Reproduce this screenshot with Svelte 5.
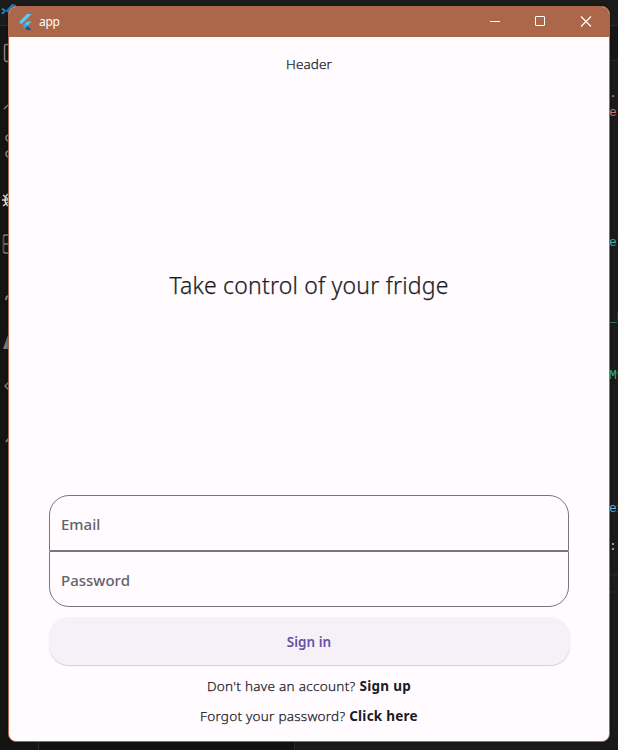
<script>
  let email = $state('');
  let password = $state('');

  const code = [
    { y: 97, text: '.t', color: '#ce7d62' },
    { y: 116, text: 'er', color: '#c97b66' },
    { y: 246, text: 'et', color: '#3fb69b' },
    { y: 321, text: '_b', color: '#3fb69b' },
    { y: 379, text: 'My', color: '#35b27c' },
    { y: 512, text: 'ex', color: '#69b5dc' },
    { y: 550, text: ':', color: '#b7bfc4' }
  ];
</script>

<div class="desktop">
  <svg class="editor" viewBox="0 0 618 750" aria-hidden="true">
    <rect width="618" height="750" fill="#141414" />
    <rect width="618" height="25" fill="#1b1b1b" />
    <rect y="25" width="618" height="1" fill="#2b2b2b" />
    <rect x="609" y="26" width="9" height="34" fill="#161616" />
    <rect x="600" y="60" width="18" height="690" fill="#1b1b1b" />
    <rect x="600" y="60" width="18" height="1" fill="#2b2b2b" />
    <rect x="600" y="574" width="18" height="2" fill="#232323" />
    <rect x="600" y="591" width="18" height="2" fill="#232323" />
    <rect x="39" y="740" width="255" height="10" fill="#121212" />
    <rect x="294" y="740" width="324" height="10" fill="#191919" />
    <rect x="38" y="740" width="1" height="10" fill="#292929" />
    <rect x="294" y="740" width="1" height="10" fill="#292929" />
    <path d="M1 9.500L3 8l3 2.500L12 4l4 1v10l-4 1-6-5-3 3.500L1 13l3-2z" fill="#2580bd" />
    <g fill="none" stroke="#858585" stroke-width="1.4">
      <path d="M10 44.500H6q-1.500 0-1.500 2v12q0 3 2 3H10" />
      <path d="M4 109l4-4M9 135q-3 0-3 3t3 3M9 151q-3 0-3 3t3 3" />
      <path d="M9 235H5q-1.500 0-1.500 2v14q0 2 2 2h4M3.500 244H9" />
      <path d="M9 382l-4 4 4 4" />
      <path d="M6 300q0-4 3-4M6 442l3-4" stroke-width="2" />
    </g>
    <path d="M3.500 236v16" stroke="#4d478d" />
    <path d="M3 195l5 4M2 200h6M3 206l5-4M8 194q-3 2-3 6t3 6" fill="none" stroke="#d6dbdc" stroke-width="1.400" />
    <path d="M3 349L8 335v14z" fill="#747d83" />
    {#each code as c}
      <text x="609" y={c.y} fill={c.color}>{c.text}</text>
    {/each}
  </svg>

  <main class="window">
    <header class="titlebar">
      <svg class="logo" width="14" height="16" viewBox="0 0 14 16" aria-hidden="true">
        <path d="M8 0H12.700L2.400 10.200 0 8z" fill="#5bc8f8" />
        <path d="M8 7.400H12.700L8.400 11.700 12.700 16H8L3.800 11.700z" fill="#55c5f7" />
        <path d="M6 13.900L8.400 11.700 12.700 16H8z" fill="#075b9e" />
        <path d="M3.800 11.700l2.300-2.200 2.300 2.200-2.300 2.200z" fill="#39a9df" />
      </svg>
      <span class="title">app</span>
      <div class="controls">
        <button aria-label="Minimize"><svg width="12" height="12"><path d="M2 5.500h10" /></svg></button>
        <button aria-label="Maximize"><svg width="12" height="12"><rect x="1.500" y=".5" width="9" height="9" rx=".5" /></svg></button>
        <button aria-label="Close"><svg width="12" height="12"><path d="M1 .5l10 10M11 .5L1 10.500" stroke-width="1.2" /></svg></button>
      </div>
    </header>
    <div class="header">Header</div>
    <div class="hero"><h1>Take control of your fridge</h1></div>
    <form onsubmit={(e) => e.preventDefault()}>
      <input class="first" type="email" placeholder="Email" bind:value={email} />
      <input class="last" type="password" placeholder="Password" bind:value={password} />
      <button class="signin">Sign in</button>
    </form>
    <p class="signup">Don't have an account? <b>Sign up</b></p>
    <p class="forgot">Forgot your password? <b>Click here</b></p>
  </main>
</div>

<style>
  .desktop {
    position: relative;
    box-sizing: border-box;
    width: 618px;
    height: 750px;
    padding: 6px 8px 8px;
    overflow: hidden;
    font-family: "Noto Sans", "Open Sans", sans-serif;
  }
  .editor {
    position: absolute;
    inset: 0;
    width: 618px;
    height: 750px;
  }
  .editor text {
    font: 13px "Liberation Mono", monospace;
  }
  .window {
    position: relative;
    box-sizing: border-box;
    display: flex;
    flex-direction: column;
    width: 602px;
    height: 736px;
    border: 1px solid #ac674a;
    border-radius: 8px;
    overflow: hidden;
    background: #fffbff;
    color: #1c1b1f;
    box-shadow: 0 0 3px #0005;
  }
  .titlebar {
    flex: none;
    display: flex;
    align-items: center;
    height: 30px;
    padding-left: 10px;
    background: #ac674a;
    color: #fff;
  }
  .logo {
    margin-top: -1px;
  }
  .title {
    margin-left: 6px;
    font-size: 12px;
    line-height: 16px;
    letter-spacing: -0.3px;
  }
  .controls {
    display: flex;
    margin-left: auto;
  }
  .controls button {
    display: flex;
    align-items: center;
    justify-content: center;
    width: 46px;
    height: 30px;
    padding: 0;
    border: 0;
    background: none;
  }
  .controls svg {
    fill: none;
    stroke: #fff;
    stroke-width: 1;
  }
  .header,
  h1,
  p {
    font-weight: 300;
    -webkit-text-stroke: 0.25px currentColor;
  }
  .header {
    flex: none;
    margin-top: 17px;
    height: 20px;
    text-align: center;
    font-size: 13.500px;
    line-height: 20px;
    letter-spacing: 0.1px;
  }
  .hero {
    flex: 1;
    display: flex;
    align-items: center;
    justify-content: center;
  }
  h1 {
    margin: 0;
    font-size: 23px;
    line-height: 32px;
    letter-spacing: 0.2px;
    white-space: nowrap;
  }
  form {
    display: flex;
    flex-direction: column;
    padding: 0 40px;
  }
  input {
    box-sizing: border-box;
    width: 520px;
    height: 56px;
    margin: 0;
    padding: 2px 11px 0;
    border: 1px solid #79747e;
    background: transparent;
    color: #1c1b1f;
    font: 500 15px "Noto Sans", "Open Sans", sans-serif;
    outline: 0;
  }
  input::placeholder {
    color: #646167;
    opacity: 1;
  }
  .first {
    border-radius: 20px 20px 0 0;
  }
  .last {
    border-radius: 0 0 20px 20px;
  }
  .signin {
    height: 48px;
    margin: 10px -0.5px 0;
    padding: 2px 0 0;
    border: 0;
    border-radius: 20px;
    background: #f6f1f8;
    box-shadow: 0 1px 1px #0000002e;
    color: #6750a4;
    font: 600 13.500px "Noto Sans", "Open Sans", sans-serif;
  }
  p {
    flex: none;
    margin: 0;
    text-align: center;
    font-size: 13.500px;
    line-height: 20px;
    letter-spacing: 0.3px;
    white-space: nowrap;
  }
  b {
    font-weight: 700;
    -webkit-text-stroke: 0;
  }
  .signup {
    margin-top: 11px;
  }
  .forgot {
    margin: 10px 0 15px;
    letter-spacing: 0.25px;
  }
</style>
